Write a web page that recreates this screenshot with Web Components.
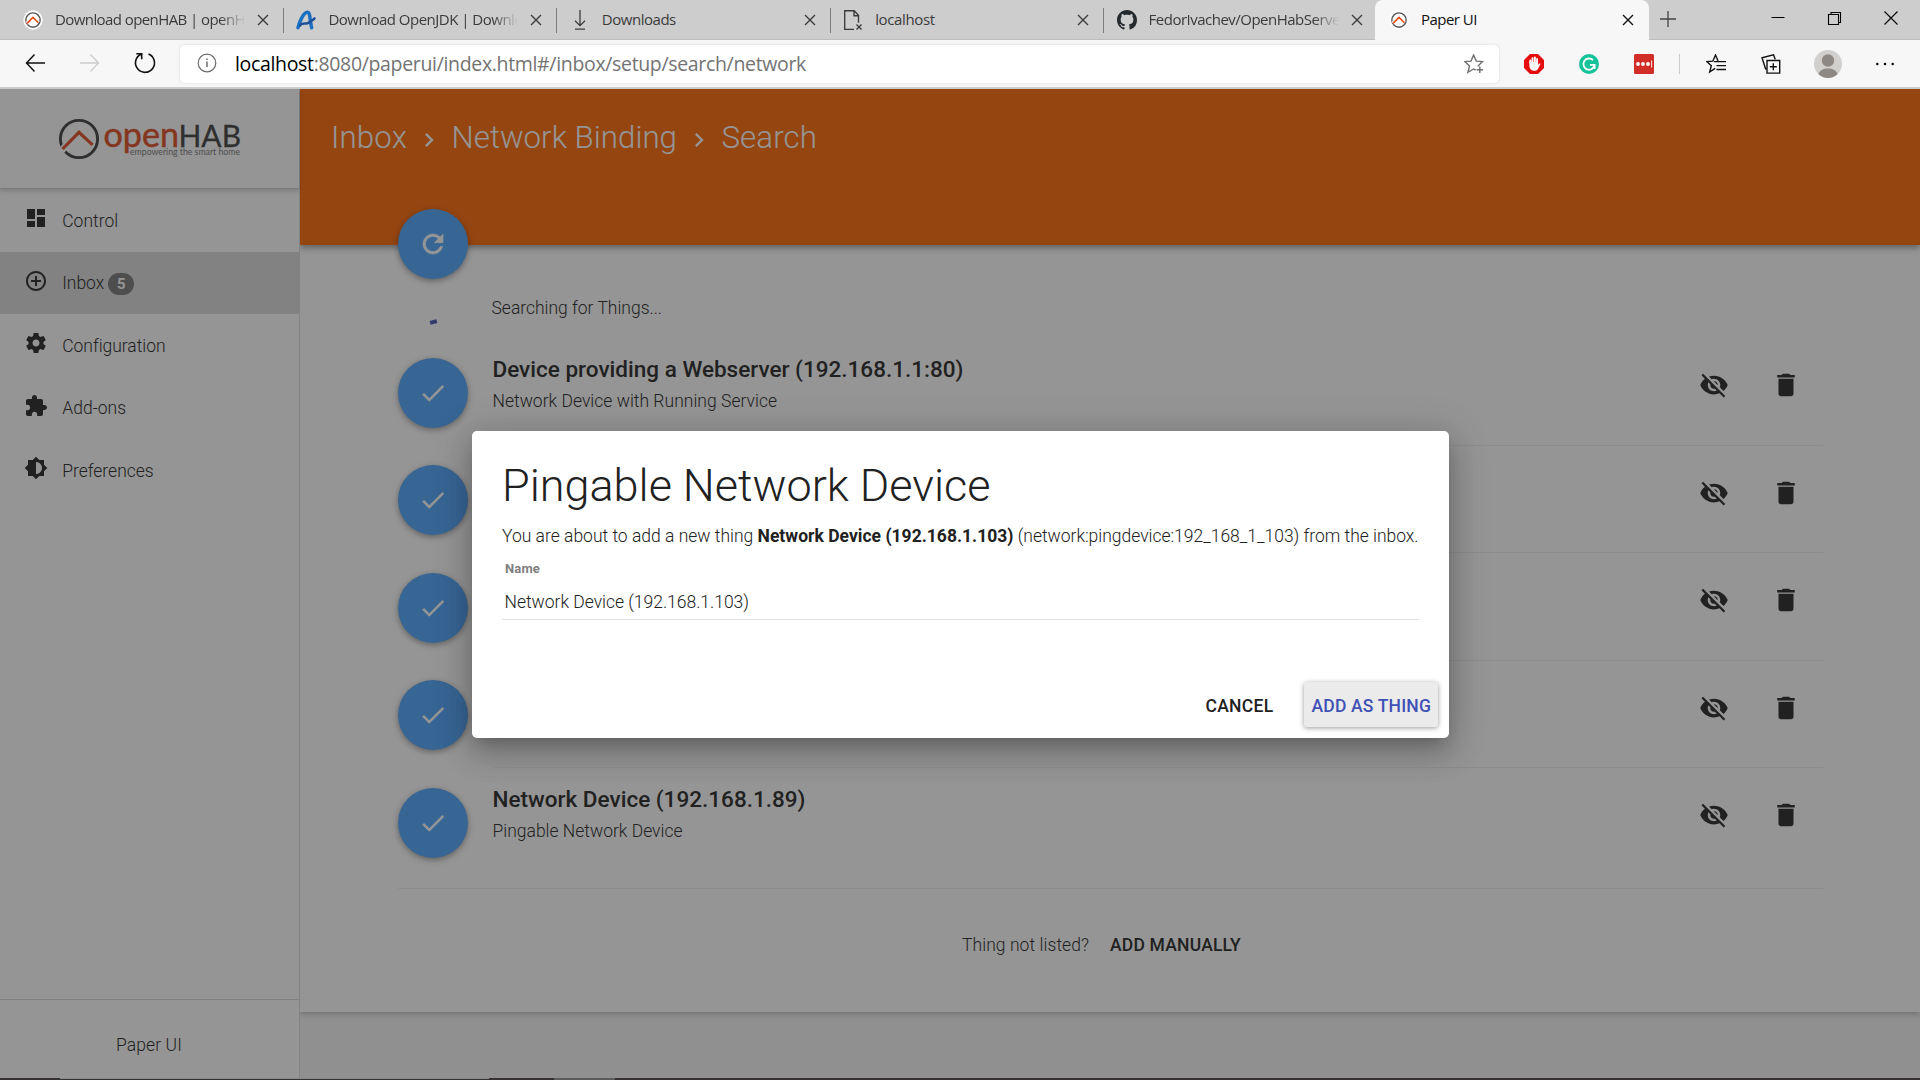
<!DOCTYPE html>
<html lang="en">
<head>
<meta charset="utf-8">
<title>Paper UI</title>
<style>
html,body{margin:0;height:100%;overflow:hidden;background:#f5f5f5;font-family:Roboto,"Liberation Sans",sans-serif}
</style>
</head>
<body>
<app-window></app-window>
<script>
const define = (name, html, init) => customElements.define(name, class extends HTMLElement {
  constructor() { super(); this.attachShadow({ mode: 'open' }); }
  connectedCallback() {
    this.shadowRoot.innerHTML = typeof html === 'function' ? html(this) : html;
    if (init) init(this);
  }
});

const MD = {
  dashboard: '<path d="M3 13h8V3H3v10zm0 8h8v-6H3v6zm10 0h8V11h-8v10zm0-18v6h8V3h-8z"/>',
  inbox: '<path d="M13 7h-2v4H7v2h4v4h2v-4h4v-2h-4V7zm-1-5C6.48 2 2 6.48 2 12s4.48 10 10 10 10-4.48 10-10S17.52 2 12 2zm0 18c-4.41 0-8-3.59-8-8s3.59-8 8-8 8 3.59 8 8-3.59 8-8 8z"/>',
  settings: '<path d="M19.43 12.98c.04-.32.07-.64.07-.98s-.03-.66-.07-.98l2.11-1.65c.19-.15.24-.42.12-.64l-2-3.46c-.12-.22-.39-.3-.61-.22l-2.49 1c-.52-.4-1.08-.73-1.69-.98l-.38-2.65C14.46 2.18 14.25 2 14 2h-4c-.25 0-.46.18-.49.42l-.38 2.65c-.61.25-1.17.59-1.69.98l-2.49-1c-.23-.09-.49 0-.61.22l-2 3.46c-.13.22-.07.49.12.64l2.11 1.65c-.04.32-.07.65-.07.98s.03.66.07.98l-2.11 1.65c-.19.15-.24.42-.12.64l2 3.46c.12.22.39.3.61.22l2.49-1c.52.4 1.08.73 1.69.98l.38 2.65c.03.24.24.42.49.42h4c.25 0 .46-.18.49-.42l.38-2.65c.61-.25 1.17-.59 1.69-.98l2.49 1c.23.09.49 0 .61-.22l2-3.46c.12-.22.07-.49-.12-.64l-2.11-1.65zM12 15.5c-1.93 0-3.5-1.57-3.5-3.5s1.57-3.5 3.5-3.5 3.5 1.57 3.5 3.5-1.57 3.5-3.5 3.5z"/>',
  extension: '<path d="M20.5 11H19V7c0-1.1-.9-2-2-2h-4V3.5C13 2.12 11.88 1 10.5 1S8 2.12 8 3.5V5H4c-1.1 0-1.99.9-1.99 2v3.8H3.5c1.49 0 2.7 1.21 2.7 2.7s-1.21 2.7-2.7 2.7H2V20c0 1.1.9 2 2 2h3.8v-1.5c0-1.49 1.21-2.7 2.7-2.7 1.49 0 2.7 1.21 2.7 2.7V22H17c1.1 0 2-.9 2-2v-4h1.5c1.38 0 2.5-1.12 2.5-2.5S21.88 11 20.5 11z"/>',
  brightness: '<path d="M20 15.31L23.31 12 20 8.69V4h-4.69L12 .69 8.69 4H4v4.69L.69 12 4 15.31V20h4.69L12 23.31 15.31 20H20v-4.69zM12 18V6c3.31 0 6 2.69 6 6s-2.69 6-6 6z"/>',
  hide: '<path d="M12 7c2.76 0 5 2.24 5 5 0 .65-.13 1.26-.36 1.83l2.92 2.92c1.51-1.26 2.7-2.89 3.43-4.75-1.73-4.39-6-7.5-11-7.5-1.4 0-2.74.25-3.98.7l2.16 2.16C10.74 7.13 11.35 7 12 7zM2 4.27l2.28 2.28.46.46C3.08 8.3 1.78 10.02 1 12c1.73 4.39 6 7.5 11 7.5 1.55 0 3.03-.3 4.38-.84l.42.42L19.73 22 21 20.73 3.27 3 2 4.27zM7.53 9.8l1.55 1.55c-.05.21-.08.43-.08.65 0 1.66 1.34 3 3 3 .22 0 .44-.03.65-.08l1.55 1.55c-.67.33-1.41.53-2.2.53-2.76 0-5-2.24-5-5 0-.79.2-1.53.53-2.2zm4.31-.78l3.15 3.15.02-.16c0-1.66-1.34-3-3-3l-.17.01z"/>',
  trash: '<path d="M6 19c0 1.1.9 2 2 2h8c1.1 0 2-.9 2-2V7H6v12zM19 4h-3.5l-1-1h-5l-1 1H5v2h14V4z"/>',
  refresh: '<path d="M17.65 6.35C16.2 4.9 14.21 4 12 4c-4.42 0-7.99 3.58-7.99 8s3.57 8 7.99 8c3.73 0 6.84-2.55 7.73-6h-2.08c-.82 2.33-3.04 4-5.65 4-3.31 0-6-2.69-6-6s2.69-6 6-6c1.66 0 3.14.69 4.22 1.78L13 11h7V4l-2.35 2.35z" stroke="currentColor" stroke-width=".5"/>',
  check: '<path d="M9 16.17L4.83 12l-1.42 1.41L9 19 21 7l-1.41-1.41z"/>',
  chevron: '<path d="M10 6L8.59 7.41 13.17 12l-4.58 4.59L10 18l6-6z"/>'
};
const HAB = '<circle cx="12" cy="12" r="11.6" fill="#fff"/><circle cx="12" cy="12" r="8.6" fill="none" stroke="#555" stroke-width="1.7"/><path d="M4.6 15.9 12 8.8l6.6 6.4" fill="none" stroke="#fff" stroke-width="4"/><path d="M4.8 16 12 8.9l6.5 6.4" fill="none" stroke="#e64a19" stroke-width="1.9"/>';
const LINE = 'fill="none" stroke="currentColor"';
/* each entry: [viewBox, markup] */
const CH = {
  hab: ['0 0 24 24', HAB],
  adopt: ['0 0 20 20', '<path d="M2 17.800C3 12.500 7.500 2.300 11.300 2.300c3 0 2.200 6 4.300 15.500" fill="none" stroke="#1b6fc0" stroke-width="3.500" stroke-linecap="round"/><path d="M4 15.500c2-3 5-1.300 7.500-2.200 2.500-.9 4.500-3 7-4.900" fill="none" stroke="#1d4f9c" stroke-width="2.500" stroke-linecap="round"/>'],
  down: ['0 0 20 20', `<path d="M10 0v15.500M5 10.800l5 4.900 5-4.900M5 19.200h10" ${LINE} stroke-width="1.3"/>`],
  page: ['0 0 20 20', `<path d="M11 19.300H1.700V.700h9.500l4.300 4.600v7.500M11 .700v5h4.500M13.500 14.500l5 5M18.500 14.500l-5 5" ${LINE} stroke-width="1.350"/>`],
  github: ['0 0 16 16', '<path fill="#24292e" d="M8 0C3.580 0 0 3.580 0 8c0 3.540 2.290 6.530 5.470 7.590.4.070.55-.17.55-.38 0-.19-.01-.82-.01-1.490-2.010.37-2.530-.49-2.690-.94-.09-.23-.48-.94-.82-1.130-.28-.15-.68-.52-.01-.53.63-.01 1.080.58 1.230.82.72 1.210 1.870.87 2.330.66.070-.52.28-.87.51-1.070-1.780-.2-3.640-.89-3.640-3.950 0-.87.31-1.590.82-2.150-.08-.2-.36-1.020.08-2.120 0 0 .67-.21 2.200.82.64-.18 1.320-.27 2-.27s1.360.09 2 .27c1.530-1.040 2.200-.82 2.200-.82.44 1.100.16 1.920.08 2.120.51.56.82 1.270.82 2.150 0 3.070-1.870 3.750-3.650 3.950.29.25.54.73.54 1.480 0 1.070-.01 1.930-.01 2.200 0 .21.15.46.55.38A8.010 8.010 0 0 0 16 8c0-4.420-3.580-8-8-8z"/>'],
  close: ['0 0 20 20', `<path d="M5 5l10 10M15 5L5 15" ${LINE} stroke-width="1.350"/>`],
  plus: ['0 0 20 20', `<path d="M10 2v16M2 10h16" ${LINE} stroke-width="1.300"/>`],
  min: ['0 0 20 20', `<path d="M3.500 9.500h13" ${LINE} stroke-width="1"/>`],
  restore: ['0 0 20 20', `<path d="M3.500 6.500h10v10h-10zM6 6V4.500h9.500v10H14" ${LINE} stroke-width="1.100"/>`],
  wclose: ['0 0 20 20', `<path d="M3.500 3.500l13 13M16.500 3.500l-13 13" ${LINE} stroke-width="1.100"/>`],
  back: ['0 0 20 20', `<path d="M9.500 1.500L1.500 10l8 8.500M1.500 10H20" ${LINE} stroke-width="1.500"/>`],
  fwd: ['0 0 20 20', `<path d="M10.500 1.500l8 8.500-8 8.500M18.500 10H0" ${LINE} stroke-width="1.300"/>`],
  reload: ['0 0 24 24', `<path d="M15.500 3a9.500 9.500 0 1 1-7.500.2M3.300 2.800h5.400v5.400" ${LINE} stroke-width="1.600"/>`],
  info: ['0 0 20 20', `<circle cx="10" cy="10" r="8.800" ${LINE} stroke-width="1.200"/><path d="M10 8.500V14M10 5.500v1.600" ${LINE} stroke-width="1.500"/>`],
  star: ['0 0 20 20', `<path d="M13.800 12.200L18.500 7.600l-6.200-.5L9.600 1 7 7.100l-6.200.5L5.500 12l-1.600 6.300L9.600 15l2 1.200M15.800 12.500v6.500M12.600 15.800H19" ${LINE} stroke-width="1.400"/>`],
  abp: ['0 0 20 20', '<path d="M6 0h8l6 6v8l-6 6H6l-6-6V6z" fill="#e40d0d"/><path d="M6.300 9v-2.500M8.500 8V4.300M10.900 8V3.500M13.100 9V4.900" stroke="#fff" stroke-width="1.900" stroke-linecap="round"/><path d="M5.400 8h8.700v3l1.200-1.500c.9-.4 1.300.3.900 1-1.600 3.200-2.400 6.300-5.500 6.300-3.500 0-5.300-2.100-5.300-5.300z" fill="#fff"/>'],
  grammar: ['0 0 20 20', '<circle cx="10" cy="10" r="10" fill="#15c39a"/><path d="M14 6.200A5.600 5.600 0 1 0 15.500 11M11 10.900h4.600v4" fill="none" stroke="#fff" stroke-width="1.800"/>'],
  pass: ['0 0 20 20', '<rect width="20" height="20" rx="1.500" fill="#d32d27"/><g fill="#fff"><circle cx="4" cy="10" r="1.900"/><circle cx="9" cy="10" r="1.900"/><circle cx="14" cy="10" r="1.900"/><path d="M17.200 6.500h.9v7h-.9z"/></g>'],
  favs: ['0 0 20 20', `<path d="M9.200 14.300L3.700 18l1.600-6.300L.8 7.600l6-.4L9.500 1l2.600 6M8 7.600h12M10.500 11.600H20M10.500 15.500H20" ${LINE} stroke-width="1.400"/>`],
  collect: ['0 0 20 20', `<path d="M6 6.500h12.700v12.600H6zM12.300 9.300v7M8.800 12.800h7M4.800 15.500L1 3.800 12.500.8l1.700 4.500" ${LINE} stroke-width="1.400"/>`],
  avatar: ['0 0 28 28', '<circle cx="14" cy="14" r="14" fill="#d2d0ce"/><circle cx="14" cy="10.500" r="6.200" fill="#8d8884"/><path d="M4.500 24.300C5.500 20.500 9 18.600 14 18.600s8.500 1.900 9.500 5.700A14 14 0 0 1 14 28a14 14 0 0 1-9.500-3.700z" fill="#8d8884"/>'],
  dots: ['0 0 20 20', '<g fill="currentColor"><circle cx="2.300" cy="10" r="1.300"/><circle cx="10" cy="10" r="1.300"/><circle cx="17.700" cy="10" r="1.300"/></g>']
};

define('md-icon', el => `<style>:host{display:block;width:var(--s,24px);height:var(--s,24px);flex:none}svg{display:block;width:100%;height:100%;fill:currentColor}</style>
<svg viewBox="0 0 24 24">${MD[el.getAttribute('name')]}</svg>`);

define('chrome-icon', el => { const [vb, m] = CH[el.getAttribute('name')];
  return `<style>:host{display:block;width:var(--s,20px);height:var(--s,20px);flex:none}svg{display:block;width:100%;height:100%}</style><svg viewBox="${vb}">${m}</svg>`; });

/* Text tracked so that it spans the width given in its "w" attribute. */
define('fit-text', '<style>:host{display:inline-block;white-space:pre}</style><slot></slot>', el => {
  const w = parseFloat(el.getAttribute('w')), n = el.textContent.length;
  if (!w) return;
  el.style.letterSpacing = '0px';
  el.style.letterSpacing = ((w - el.getBoundingClientRect().width) / n).toFixed(3) + 'px';
});

define('browser-tab', el => `<style>
:host{display:flex;align-items:center;box-sizing:border-box;width:273.4px;height:40px;flex:none;padding-left:13px;color:#3b3b3b;position:relative;font:15px "Open Sans","Noto Sans",sans-serif}
:host([last]){width:271.400px}
:host([active]){width:274px}
:host(:not([active],[last]))::after{content:"";position:absolute;right:-.5px;top:8px;width:1px;height:25px;background:#7c7c7c}
:host([active]){background:#f7f7f7;color:#111;border-radius:8px 8px 0 0;padding-left:14px}
.t{flex:none;width:190px;margin-left:12px;overflow:hidden;white-space:nowrap;line-height:24px;height:24px;margin-top:-2px}
:host([fade]) .t{-webkit-mask:linear-gradient(90deg,#000 165px,transparent 190px);mask:linear-gradient(90deg,#000 165px,transparent 190px)}
.x{margin-left:8px}
:host([active]) .x{margin-left:7px}
</style><chrome-icon name="${el.getAttribute('icon')}"></chrome-icon><div class="t"><fit-text w="${el.getAttribute('w')}">${el.getAttribute('label')}</fit-text></div><chrome-icon class="x" name="close"></chrome-icon>`);

define('tab-strip', `<style>
:host{display:flex;height:40px;background:#cdcdcd;padding-left:10px;box-shadow:inset 0 -1px 0 #bdbdbd}
.plus{margin:9px 0 0 9px;color:#444}
.win{margin-left:auto;display:flex;gap:36.500px;padding:8px 19px 0 0;color:#000}
</style>
<browser-tab icon="hab" label="Download openHAB | openHAB" w="208" fade></browser-tab>
<browser-tab icon="adopt" label="Download OpenJDK | Download" w="211" fade></browser-tab>
<browser-tab icon="down" label="Downloads" w="74"></browser-tab>
<browser-tab icon="page" label="localhost" w="59.500"></browser-tab>
<browser-tab icon="github" label="FedorIvachev/OpenHabServer" w="197" fade last></browser-tab>
<browser-tab icon="hab" label="Paper UI" w="56" active></browser-tab>
<chrome-icon class="plus" name="plus"></chrome-icon>
<div class="win"><chrome-icon name="min"></chrome-icon><chrome-icon name="restore"></chrome-icon><chrome-icon name="wclose"></chrome-icon></div>`);

define('tool-bar', `<style>
:host{display:flex;height:49px;box-sizing:border-box;background:#f7f7f7;border-bottom:2px solid #ccc;padding:0 25px;color:#111}
.nav{display:flex;gap:35px;padding-top:13px;width:155px;flex:none}
.nav chrome-icon:nth-child(2){color:#ccc}
.nav chrome-icon:nth-child(3){--s:24px;margin:-2px 0 0 -2px}
.bar{display:flex;width:1319px;height:38px;margin-top:5px;background:#fff;border-radius:5px;box-shadow:0 0 3px rgba(0,0,0,.12);box-sizing:border-box;padding:8px 15px 0 17px;color:#6e6e6e;flex:none}
.url{margin:-1px 0 0 18px;font:19.500px/24px "Open Sans","Noto Sans",sans-serif;color:#737373;flex:1}
.url b{font-weight:400;color:#000}
.ext{display:flex;gap:35px;padding:14px 0 0 25px}
.sep{width:1px;height:20px;background:#ccc;margin-left:25px;margin-top:14px}
.menu{display:flex;gap:35px;padding:14px 0 0 26px}
.av{--s:28px;margin:-4px -2px 0 -2px}
</style>
<div class="nav"><chrome-icon name="back"></chrome-icon><chrome-icon name="fwd"></chrome-icon><chrome-icon name="reload"></chrome-icon></div>
<div class="bar"><chrome-icon name="info"></chrome-icon><div class="url"><fit-text w="571"><b>localhost</b>:8080/paperui/index.html#/inbox/setup/search/network</fit-text></div><chrome-icon name="star" style="margin-top:1px"></chrome-icon></div>
<div class="ext"><chrome-icon name="abp"></chrome-icon><chrome-icon name="grammar"></chrome-icon><chrome-icon name="pass"></chrome-icon></div>
<div class="sep"></div>
<div class="menu"><chrome-icon name="favs"></chrome-icon><chrome-icon name="collect"></chrome-icon><chrome-icon class="av" name="avatar"></chrome-icon><chrome-icon name="dots"></chrome-icon></div>`);

define('hab-logo', `<style>:host{display:block}svg{display:block}text{font-family:Lato,sans-serif}</style>
<svg width="190" height="48" viewBox="55 115 190 48">
<circle cx="79" cy="139" r="18.600" fill="none" stroke="#3c3c3c" stroke-width="2.900"/>
<path d="M61.500 150.500L79 132.500l13.500 13" fill="none" stroke="#fff" stroke-width="7"/>
<path d="M62.500 149L79 132.300l13.500 12.500" fill="none" stroke="#e04a1e" stroke-width="3.200"/>
<text x="103.500" y="146.500" font-size="34" font-weight="400" stroke-width=".5" stroke="#e04a1e" fill="#e04a1e" textLength="75.500" lengthAdjust="spacingAndGlyphs">open</text>
<text x="178.500" y="146.500" font-size="31" font-weight="400" stroke-width=".3" stroke="#3c3c3c" fill="#3c3c3c" textLength="62.500" lengthAdjust="spacingAndGlyphs">HAB</text>
<text x="130" y="154.800" font-size="9.500" fill="#777" textLength="110" lengthAdjust="spacingAndGlyphs">empowering the smart home</text>
</svg>`);

define('nav-item', el => `<style>
:host{display:flex;align-items:center;height:62.500px;box-sizing:border-box;padding-left:24.300px;color:#212121;font-weight:300;font-size:17.500px}
:host([selected]){background:#dadada}
md-icon{--s:24px;margin-top:-4px}
.l{margin-left:13.900px;line-height:24px;margin-top:1px}
.b{margin-left:4px;background:#777;color:#fff;border-radius:11px;width:26px;height:22px;font-weight:700;font-size:15px;line-height:22px;text-align:center;margin-top:2px}
</style><md-icon name="${el.getAttribute('icon')}"></md-icon><fit-text class="l" w="${el.getAttribute('w')}">${el.getAttribute('label')}</fit-text>${el.hasAttribute('badge') ? `<span class="b">${el.getAttribute('badge')}</span>` : ''}`);

define('side-nav', `<style>
:host{display:flex;flex-direction:column;width:300px;box-sizing:border-box;border-right:1px solid #dcdcdc;background:#fff;flex:none;position:relative;z-index:1}
.head{height:99.500px;box-sizing:border-box;padding:26px 0 0 55px;border-bottom:1px solid #ccc;box-shadow:0 2px 5px rgba(0,0,0,.2);flex:none;position:relative;z-index:1}
nav{flex:1;padding-top:.6px}
.foot{height:79px;box-sizing:border-box;border-top:1px solid #d9d9d9;padding:33px 0 0 116px;font-weight:300;font-size:17.500px;line-height:24px;color:#212121}
</style>
<div class="head"><hab-logo></hab-logo></div>
<nav>
<nav-item icon="dashboard" label="Control" w="56"></nav-item>
<nav-item icon="inbox" label="Inbox" w="42" badge="5" selected></nav-item>
<nav-item icon="settings" label="Configuration" w="103"></nav-item>
<nav-item icon="extension" label="Add-ons" w="64"></nav-item>
<nav-item icon="brightness" label="Preferences" w="91.500"></nav-item>
</nav>
<div class="foot"><fit-text w="66">Paper UI</fit-text></div>`);

define('round-fab', el => `<style>
:host{display:grid;place-items:center;width:70px;height:70px;border-radius:50%;background:#4ba3fe;color:#fff;box-shadow:0 2px 6px rgba(0,0,0,.4);flex:none;box-sizing:border-box}
md-icon{--s:30px}
</style><md-icon name="${el.getAttribute('icon')}"></md-icon>`);

define('thing-row', el => `<style>
:host{display:flex;height:107.500px;color:#212121}
round-fab{margin:19.500px 25px 0 0}
.body{flex:1;display:flex;box-sizing:border-box;border-bottom:1px solid #efefef;height:107.500px}
:host([last]){height:120.500px;border-bottom:1px solid #efefef;box-sizing:border-box}
:host([last]) .body{border:0}
.txt{flex:1;padding-top:16.500px;margin-left:-.5px}
.t{font-weight:500;font-size:22.500px;line-height:28px}
.s{font-weight:300;font-size:17.500px;line-height:24px;margin-top:6.500px}
.act{display:flex;gap:42.500px;padding:32px 22px 0 0}
md-icon{--s:30px}
</style><round-fab icon="check"></round-fab><div class="body"><div class="txt">${el.hasAttribute('label') ? `<div class="t"><fit-text w="${el.getAttribute('tw')}">${el.getAttribute('label')}</fit-text></div><div class="s"><fit-text w="${el.getAttribute('sw')}">${el.getAttribute('sub')}</fit-text></div>` : ''}</div>
<div class="act"><md-icon name="hide"></md-icon><md-icon name="trash"></md-icon></div></div>`);

define('inbox-page', `<style>
:host{display:block;flex:1;background:#f5f5f5}
.card{height:923px;background:#fff;box-shadow:0 2px 6px rgba(0,0,0,.25);display:flex;flex-direction:column;overflow:visible}
header{height:156px;background:#f60;color:#fff;box-sizing:border-box;padding:30px 0 0 31px;display:flex;align-items:flex-start;font-size:31.250px;line-height:37px;font-weight:300;box-shadow:0 3px 6px rgba(0,0,0,.38);position:relative;flex:none}
header md-icon{--s:28px;margin:7px 8.500px 0 8px}
header round-fab{position:absolute;left:98px;top:120px}
.search{display:flex;height:93px;flex:none;box-sizing:border-box;padding:50.500px 0 0 98px;font-weight:300;font-size:17.500px;line-height:24px;color:#212121}
.spin{width:7px;height:4px;background:#3f51b5;transform:rotate(-15deg);margin:24px 54.500px 0 32px}
.rows{padding:0 97px 0 98px}
.foot{display:flex;justify-content:center;padding:44px 0 0 0;font-size:17.500px;line-height:24px;color:#212121;font-weight:300;gap:21px;margin-right:17px}
.foot b{font-weight:500}
</style>
<div class="card">
<header><fit-text w="76">Inbox</fit-text><md-icon name="chevron"></md-icon><fit-text w="225.500">Network Binding</fit-text><md-icon name="chevron"></md-icon><fit-text w="95.500">Search</fit-text><round-fab icon="refresh"></round-fab></header>
<div class="search"><div class="spin"></div><fit-text w="170.500">Searching for Things...</fit-text></div>
<div class="rows">
<thing-row label="Device providing a Webserver (192.168.1.1:80)" tw="471" sub="Network Device with Running Service" sw="284.500"></thing-row>
<thing-row></thing-row>
<thing-row></thing-row>
<thing-row></thing-row>
<thing-row last label="Network Device (192.168.1.89)" tw="313" sub="Pingable Network Device" sw="190"></thing-row>
</div>
<div class="foot"><fit-text w="127">Thing not listed?</fit-text><b><fit-text w="131">ADD MANUALLY</fit-text></b></div>
</div>`);

define('thing-dialog', `<style>
:host{display:flex;flex-direction:column;width:977px;height:307px;box-sizing:border-box;background:#fff;border-radius:5px;box-shadow:0 9px 14px -6px rgba(0,0,0,.2),0 16px 30px 2px rgba(0,0,0,.14),0 5px 38px 6px rgba(0,0,0,.14);color:#212121;padding:27.500px 30px 10px}
h2{margin:0;font-weight:300;font-size:45px;line-height:54px}
p{margin:11.500px 0 0;font-weight:300;font-size:17.500px;line-height:24px;white-space:nowrap;display:flex}
b{font-weight:700}
label{font-weight:700;font-size:13px;line-height:16px;color:#808080;margin:12.500px 0 0 3px}
.in{font-weight:300;font-size:17.500px;line-height:24px;padding:13px 0 5px 2.500px;border-bottom:1px solid #e0e0e0;height:24px}
.btns{display:flex;justify-content:flex-end;margin:62px -19px 0 0;gap:23px;font-weight:500;font-size:17.500px;line-height:49px}
.btns div{height:45px;padding:0 7px}
.btns .p{background:#ebebeb;color:#3f51b5;box-shadow:0 1px 5px rgba(0,0,0,.4);border-radius:3px;padding:0 7px 0 8px}
</style>
<h2><fit-text w="488.500">Pingable Network Device</fit-text></h2>
<p><fit-text w="255.500">You are about to add a new thing </fit-text><b><fit-text w="256">Network Device (192.168.1.103)</fit-text></b><fit-text w="405"> (network:pingdevice:192_168_1_103) from the inbox.</fit-text></p>
<label><fit-text w="35">Name</fit-text></label>
<div class="in"><fit-text w="244.500">Network Device (192.168.1.103)</fit-text></div>
<div class="btns"><div><fit-text w="68">CANCEL</fit-text></div><div class="p"><fit-text w="119.500">ADD AS THING</fit-text></div></div>`);

define('app-window', `<style>
:host{display:flex;flex-direction:column;width:1920px;height:1080px;overflow:hidden}
.page{display:flex;height:989px;position:relative;flex:none;overflow:hidden}
.scrim{position:absolute;inset:0;background:rgba(33,33,33,.48);z-index:5}
thing-dialog{position:absolute;left:472px;top:342px;z-index:6}
.task{display:flex;height:2px;background:#353134}
.task i{height:2px}
</style>
<tab-strip></tab-strip><tool-bar></tool-bar>
<div class="page"><side-nav></side-nav><inbox-page></inbox-page><div class="scrim"></div><thing-dialog></thing-dialog></div>
<div class="task"><i style="width:60px"></i><i style="width:429px;background:#333;border-top:1px solid #888;box-sizing:border-box"></i><i style="width:65px"></i><i style="width:61px;background:#5b5b5d"></i></div>`);
</script>
</body>
</html>
